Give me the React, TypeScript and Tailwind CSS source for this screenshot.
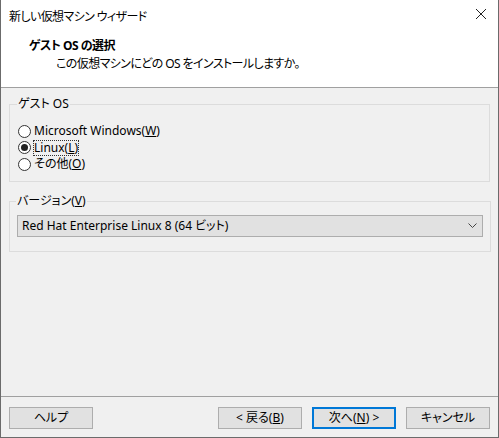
import React from 'react'

const FONT = { fontFamily: '"Noto Sans", "Noto Sans CJK JP", sans-serif' }

function Radio({ checked, label, focus }: { checked?: boolean; label: React.ReactNode; focus?: boolean }) {
  return (
    <div className="flex items-center h-[16.5px]">
      <span className="w-[13px] h-[13px] rounded-full border border-[#333] bg-white flex items-center justify-center mr-[3px]">
        {checked && <span className="w-[7px] h-[7px] rounded-full bg-[#222]" />}
      </span>
      <span className={focus ? 'outline outline-1 outline-dotted outline-[#333] leading-[14px]' : 'leading-[14px]'}>{label}</span>
    </div>
  )
}

function Btn({ children, primary }: { children: React.ReactNode; primary?: boolean }) {
  return (
    <button
      className={`w-[84px] h-[22px] bg-[#e1e1e1] text-[12px] text-black flex items-center justify-center ${
        primary ? 'border-2 border-[#0078d7]' : 'border border-[#adadad]'
      }`}
    >
      {children}
    </button>
  )
}

export default function App() {
  return (
    <div
      style={FONT}
      className='w-[499px] h-[438px] flex flex-col bg-[#f0f0f0] border-x border-b border-[#6b6b6b] text-[12px] text-black overflow-hidden [font-feature-settings:"palt"]'
    >
      {/* タイトルバー */}
      <div className="h-[32px] bg-white flex items-center pl-[8px] pr-[10px] shrink-0">
        <span className="flex-1 mt-[1px] tracking-[-0.6px]">新しい仮想マシン ウィザード</span>
        <svg width="12" height="12" viewBox="0 0 12 12" className="mr-[1px] mb-[4px]">
          <path d="M1 1 L11 11 M11 1 L1 11" stroke="#222" strokeWidth="1" />
        </svg>
      </div>
      {/* ヘッダー */}
      <div className="h-[56px] bg-white border-b border-[#a0a0a0] shrink-0 pl-[28px] pt-[5px]">
        <div className="font-bold leading-[17px] tracking-[-0.5px]">ゲスト OS の選択</div>
        <div className="pl-[27px] leading-[18px] mt-[1px] tracking-[-0.6px]">この仮想マシンにどの OS をインストールしますか。</div>
      </div>
      {/* 本文 */}
      <div className="flex-1 px-[8px] pt-[9px]">
        <fieldset className="border border-[#dcdcdc] h-[85px] w-[481px] pl-[8px] pt-[12px]">
          <legend className="px-[1px] ml-[-1px] leading-[14px]">ゲスト OS</legend>
          <div className="flex flex-col">
            <Radio label={<>Microsoft Windows(<u>W</u>)</>} />
            <Radio checked focus label={<>Linux(<u>L</u>)</>} />
            <Radio label={<>その他(<u>O</u>)</>} />
          </div>
        </fieldset>
        <fieldset className="border border-[#dcdcdc] h-[58px] w-[481px] mt-[12px] px-[7px] pt-[7px]">
          <legend className="px-[1px] ml-[-1px] leading-[14px]">バージョン(<u>V</u>)</legend>
          <div className="h-[22px] w-[466px] bg-[#e1e1e1] border border-[#adadad] flex items-center pl-[4px] pr-[5px]">
            <span className="flex-1">Red Hat Enterprise Linux 8 (64 ビット)</span>
            <svg width="9" height="6" viewBox="0 0 9 6">
              <path d="M0.5 0.5 L4.5 4.5 L8.5 0.5" stroke="#444" strokeWidth="1" fill="none" />
            </svg>
          </div>
        </fieldset>
      </div>
      {/* フッター */}
      <div className="h-[41px] border-t border-[#a0a0a0] shrink-0 flex items-start pt-[10px] px-[8px]">
        <Btn>ヘルプ</Btn>
        <div className="flex-1" />
        <div className="flex gap-[10px]">
          <Btn>&lt; 戻る(<u>B</u>)</Btn>
          <Btn primary>次へ(<u>N</u>) &gt;</Btn>
          <Btn>キャンセル</Btn>
        </div>
      </div>
    </div>
  )
}
